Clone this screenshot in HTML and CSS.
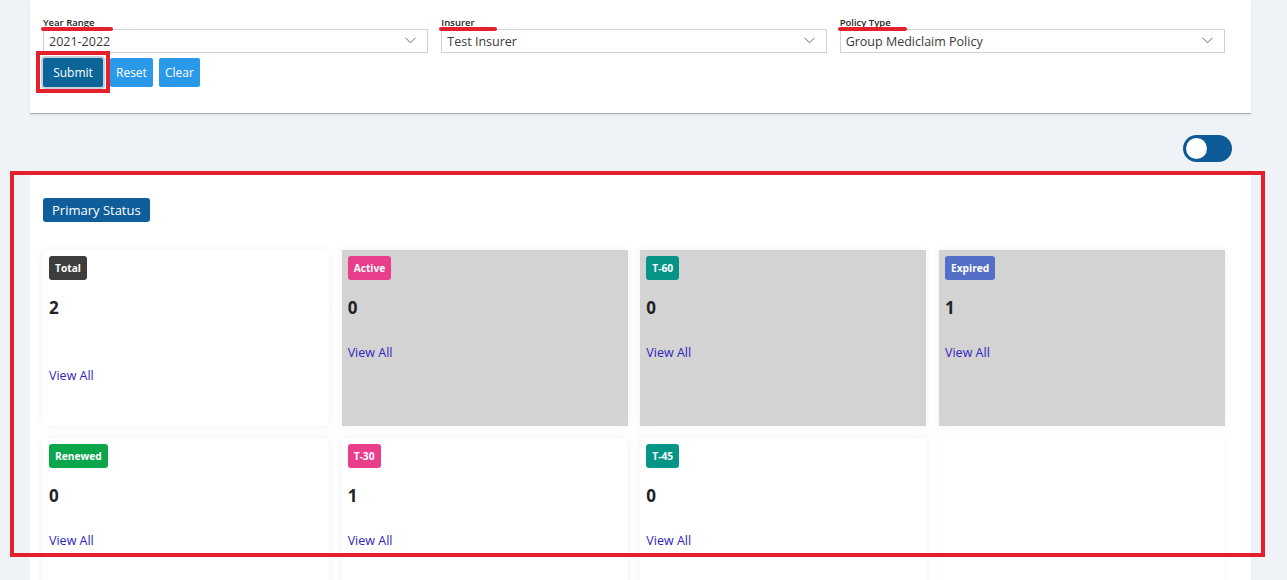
FILE: index.html
```html
<!DOCTYPE html>
<html lang="en">
<head>
<meta charset="utf-8">
<title>Primary Status</title>
<link rel="stylesheet" href="styles.css">
</head>
<body>
<div class="page">
  <section class="filter-card">
    <div class="filters">
      <div class="field">
        <label class="label"><span class="mark mark-year"></span>Year Range</label>
        <div class="select"><span>2021-2022</span><svg class="chev" width="11" height="7" viewBox="0 0 11 7"><polyline points="0.5,0.8 5.5,5.8 10.5,0.8" fill="none" stroke="#6a6a6a" stroke-width="1"/></svg></div>
      </div>
      <div class="field">
        <label class="label"><span class="mark mark-ins"></span>Insurer</label>
        <div class="select"><span>Test Insurer</span><svg class="chev" width="11" height="7" viewBox="0 0 11 7"><polyline points="0.5,0.8 5.5,5.8 10.5,0.8" fill="none" stroke="#6a6a6a" stroke-width="1"/></svg></div>
      </div>
      <div class="field">
        <label class="label"><span class="mark mark-pol"></span>Policy Type</label>
        <div class="select"><span>Group Mediclaim Policy</span><svg class="chev" width="11" height="7" viewBox="0 0 11 7"><polyline points="0.5,0.8 5.5,5.8 10.5,0.8" fill="none" stroke="#6a6a6a" stroke-width="1"/></svg></div>
      </div>
    </div>
    <div class="actions">
      <span class="submit-wrap"><button class="btn btn-submit">Submit</button></span>
      <button class="btn btn-light">Reset</button>
      <button class="btn btn-light">Clear</button>
    </div>
  </section>

  <div class="toggle-row">
    <span class="toggle"><span class="knob"></span></span>
  </div>

  <div class="status-area">
    <div class="annot-box"></div>
    <section class="status-card">
      <div class="section-title">Primary Status</div>
      <div class="grid">
        <div class="stat">
          <span class="badge b-total">Total</span>
          <div class="num">2</div>
          <div class="spacer"></div>
          <a class="view">View All</a>
        </div>
        <div class="stat gray">
          <span class="badge b-pink">Active</span>
          <div class="num">0</div>
          <a class="view">View All</a>
        </div>
        <div class="stat gray">
          <span class="badge b-teal">T-60</span>
          <div class="num">0</div>
          <a class="view">View All</a>
        </div>
        <div class="stat gray">
          <span class="badge b-indigo">Expired</span>
          <div class="num">1</div>
          <a class="view">View All</a>
        </div>
        <div class="stat">
          <span class="badge b-green">Renewed</span>
          <div class="num">0</div>
          <a class="view">View All</a>
        </div>
        <div class="stat">
          <span class="badge b-pink">T-30</span>
          <div class="num">1</div>
          <a class="view">View All</a>
        </div>
        <div class="stat">
          <span class="badge b-teal">T-45</span>
          <div class="num">0</div>
          <a class="view">View All</a>
        </div>
        <div class="stat empty"></div>
      </div>
    </section>
  </div>
</div>
</body>
</html>
```

FILE: styles.css
```css
* { box-sizing: border-box; }
html, body { margin: 0; padding: 0; }
body {
  background: #eff3f7;
  font-family: "Open Sans", "Noto Sans", "Liberation Sans", sans-serif;
  color: #222;
  overflow: hidden;
  height: 580px;
}
.page { padding: 0 36px 0 30px; }

.filter-card {
  background: #fff;
  height: 114px;
  padding: 16px 26px 0 13px;
  border-bottom: 1px solid #a9adb2;
  box-shadow: 0 1px 2px rgba(0,0,0,0.08);
}
.filters {
  display: grid;
  grid-template-columns: repeat(3, 1fr);
  column-gap: 13px;
}
.field { display: flex; flex-direction: column; }
.label {
  position: relative;
  font-size: 9.5px;
  font-weight: 600;
  line-height: 13px;
  height: 13px;
  color: #222;
}
.mark {
  position: absolute;
  top: 11px;
  left: -2px;
  height: 3.5px;
  border-radius: 2px;
  background: #e3202b;
}
.mark-year { width: 72px; }
.mark-ins { width: 58px; }
.mark-pol { width: 69px; }
.select {
  height: 24px;
  border: 1px solid #cfd3d8;
  background: #fff;
  display: flex;
  align-items: center;
  justify-content: space-between;
  padding: 0 11px 0 5px;
  font-size: 12.5px;
  color: #3a3a3a;
}
.chev { display: block; margin-top: -2px; }

.actions {
  display: flex;
  gap: 6px;
  margin-top: 5px;
  align-items: center;
}
.submit-wrap {
  position: relative;
  display: inline-flex;
}
.submit-wrap::after {
  content: "";
  position: absolute;
  left: -7px; right: -7px; top: -7px; bottom: -6px;
  border: 4px solid #e3202b;
  pointer-events: none;
}
.btn {
  height: 29px;
  border: 0;
  border-radius: 2px;
  color: #fff;
  font-family: inherit;
  font-size: 12px;
  padding: 0 6px;
  line-height: 29px;
}
.btn-submit {
  background: #0b6598;
  width: 60px;
  box-shadow: 0 0 0 2px #c9cfdd;
}
.btn-light { background: #2b99ea; }
.submit-wrap + .btn { margin-left: 1px; }

.toggle-row {
  display: flex;
  justify-content: flex-end;
  padding-right: 19px;
  margin-top: 21px;
}
.toggle {
  width: 49px;
  height: 27px;
  border-radius: 14px;
  background: #0d5a98;
  display: flex;
  align-items: center;
  padding-left: 3px;
}
.knob {
  width: 21px;
  height: 21px;
  border-radius: 50%;
  background: #fff;
}

.status-area {
  position: relative;
  margin-top: 10px;
}
.annot-box {
  position: absolute;
  left: -20px;
  right: -14px;
  top: -1px;
  height: 386px;
  border: 4px solid #e3202b;
  z-index: 2;
  pointer-events: none;
}
.status-card {
  background: #fff;
  padding: 26px 26px 0 13px;
  height: 420px;
}
.section-title {
  display: inline-block;
  background: #0f5d9b;
  color: #fff;
  font-size: 13px;
  line-height: 24px;
  height: 24px;
  padding: 0 9px;
  border-radius: 3px;
}
.grid {
  margin-top: 28px;
  display: grid;
  grid-template-columns: repeat(4, 1fr);
  gap: 12px 12.7px;
}
.stat {
  min-height: 176px;
  background: #fff;
  padding: 6px;
  display: flex;
  flex-direction: column;
  align-items: flex-start;
  box-shadow: 0 0 8px rgba(0,0,0,0.06);
}
.stat.gray { background: #d3d3d3; }
.stat.empty { box-shadow: 0 0 6px rgba(0,0,0,0.035); }
.badge {
  display: inline-block;
  color: #fff;
  font-size: 10.2px;
  font-weight: 700;
  line-height: 24px;
  height: 24px;
  padding: 0 6px;
  border-radius: 3px;
}
.b-total { background: #3e3e3e; }
.b-pink { background: #e83e8c; }
.b-teal { background: #049587; }
.b-indigo { background: #5470c6; }
.b-green { background: #0ba64b; }
.num {
  margin-top: 17px;
  font-size: 17px;
  font-weight: 700;
  line-height: 22px;
  color: #222;
}
.spacer { height: 23px; }
.view {
  margin-top: 25px;
  font-size: 12.5px;
  line-height: 18px;
  color: #2e22c2;
  cursor: pointer;
}
```
